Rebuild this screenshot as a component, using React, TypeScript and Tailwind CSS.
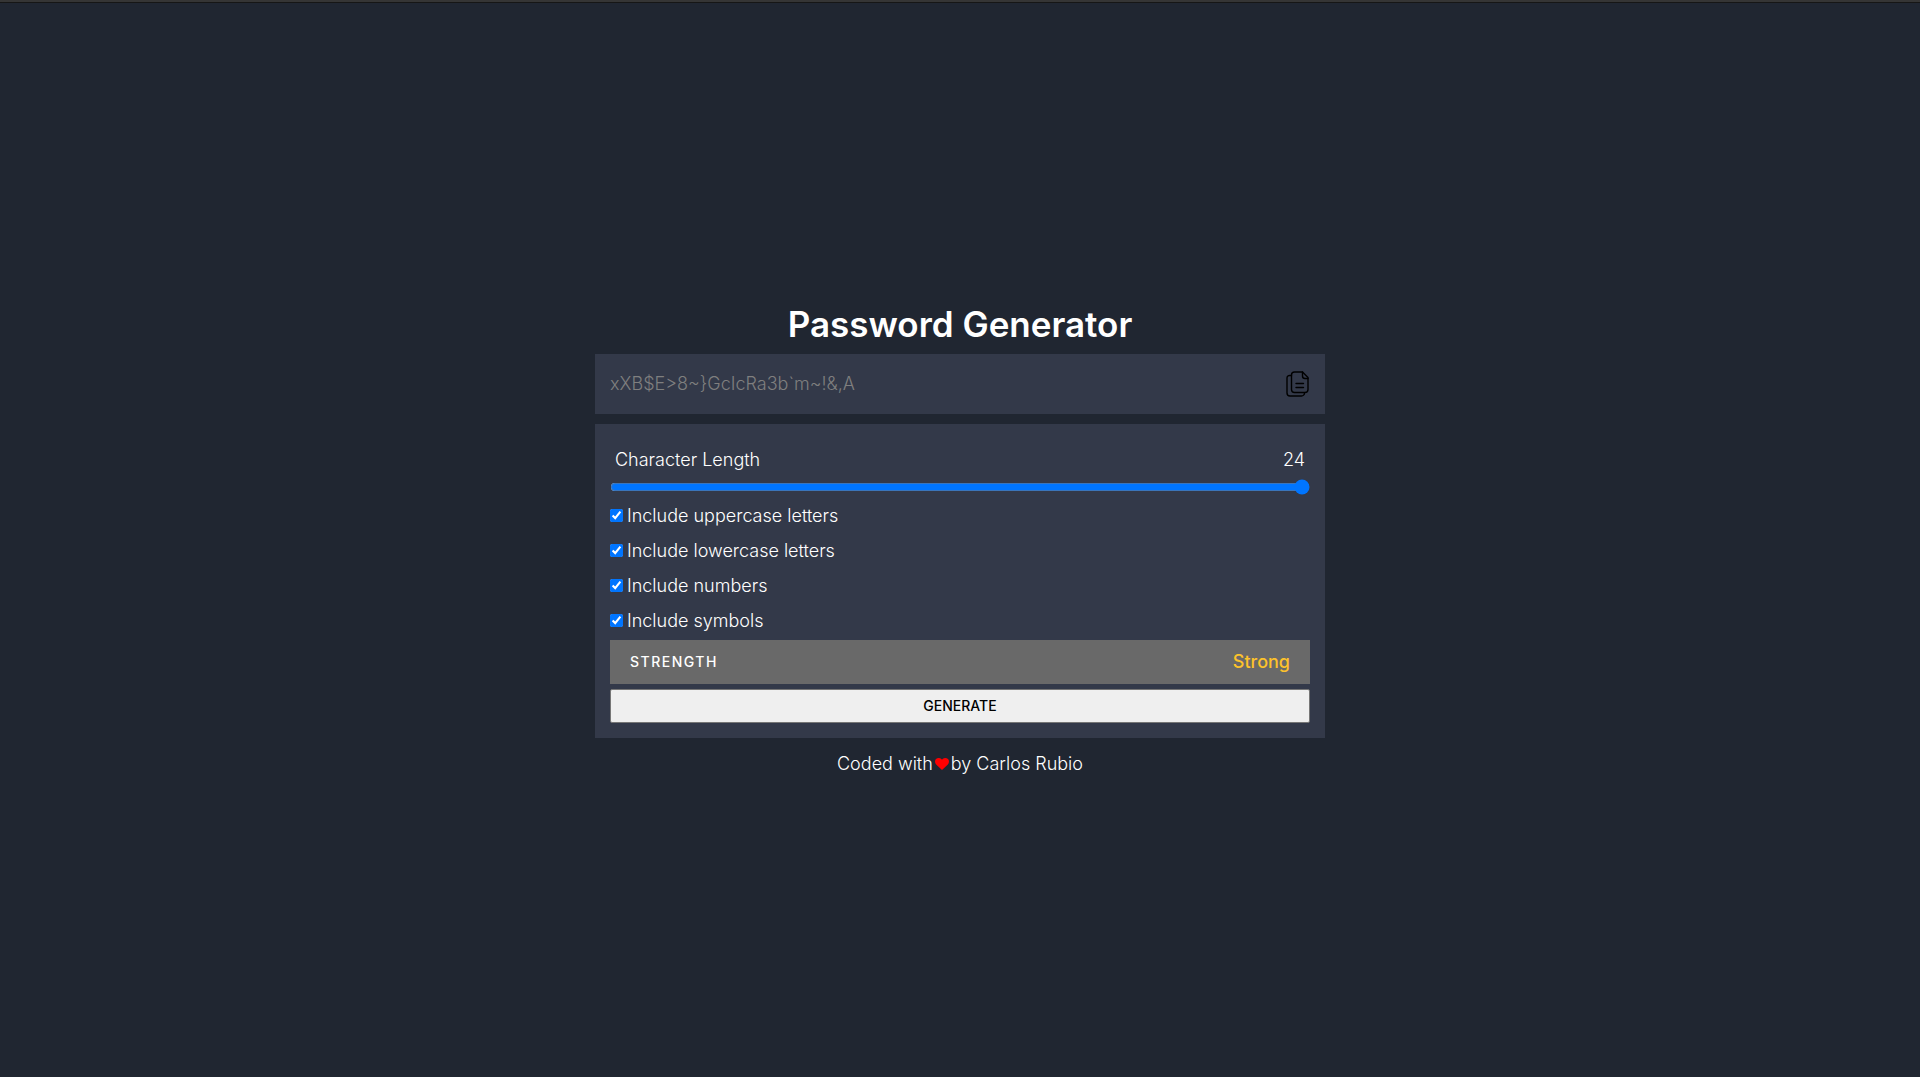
import { useState } from "react";
import type { SVGProps } from "react";

const OPTIONS = [
  { id: "uppercase", label: "Include uppercase letters" },
  { id: "lowercase", label: "Include lowercase letters" },
  { id: "numbers", label: "Include numbers" },
  { id: "symbols", label: "Include symbols" },
];

function CopyIcon(props: SVGProps<SVGSVGElement>) {
  return (
    <svg viewBox="0 0 24 26" fill="none" stroke="currentColor" strokeWidth="1.4" strokeLinecap="round" strokeLinejoin="round" {...props}>
      <path d="M8.500 1H16.500L22 6.500V18.500a3 3 0 0 1-3 3H8.500a3 3 0 0 1-3-3V4a3 3 0 0 1 3-3z" />
      <path d="M16.500 1v4a2.500 2.500 0 0 0 2.500 2.500h3" />
      <path d="M5.500 4.500H4A2.500 2.500 0 0 0 1 7v15a3 3 0 0 0 3 3h11.500a3 3 0 0 0 3-3" />
      <path d="M10 12.500h7.500M10 16.500h7.500" />
    </svg>
  );
}

function HeartIcon(props: SVGProps<SVGSVGElement>) {
  return (
    <svg viewBox="0 0 14 12" fill="red" {...props}>
      <path d="M7 12 1.400 6.700C-.3 5-.4 2.500 1 1.100 2.600-.4 5-.3 6.400 1.100l.6.700.6-.7C9-.3 11.400-.4 13 1.100c1.400 1.400 1.300 3.900-.4 5.600z" />
    </svg>
  );
}

export default function App() {
  const [length, setLength] = useState(24);

  return (
    <div className="flex min-h-screen flex-col bg-[#202631] font-['Inter',sans-serif] text-[18px] leading-[25px] font-light text-white">
      <div className="h-[3px] border-b border-[#161616] bg-[#353535]" />
      <main className="flex grow flex-col items-center justify-center px-4 pb-[3px]">
        <h1 className="pt-[6px] text-[35px] leading-[60px] font-semibold">Password Generator</h1>

        <div className="mb-[10px] flex h-[60px] w-full max-w-[730px] items-center bg-[#333949] px-[15px]">
          <input
            type="text"
            aria-label="Generated password"
            placeholder="xXB$E>8~}GcIcRa3b`m~!&,A"
            className="min-w-0 grow bg-transparent outline-none placeholder:text-[#7f7f7f]"
          />
          <button type="button" aria-label="Copy password" className="text-black">
            <CopyIcon className="h-[26px] w-6" />
          </button>
        </div>

        <form className="flex w-full max-w-[730px] flex-col bg-[#333949] p-[15px]" onSubmit={(e) => e.preventDefault()}>
          <div className="flex h-10 items-center justify-between px-[5px] pt-[2px]">
            <label htmlFor="length">Character Length</label>
            <output htmlFor="length">{length}</output>
          </div>
          <input
            id="length"
            type="range"
            min={4}
            max={24}
            value={length}
            onChange={(e) => setLength(Number(e.target.value))}
            className="mb-[3px] h-4 w-full"
          />
          {OPTIONS.map(({ id, label }) => (
            <div key={id} className="flex items-center gap-1 py-[5px]">
              <input id={id} type="checkbox" defaultChecked className="size-[13px]" />
              <label htmlFor={id}>{label}</label>
            </div>
          ))}
          <div className="mt-[2px] flex h-11 items-center justify-between bg-[#696969] px-5">
            <span className="text-[14px] font-medium tracking-[1.5px]">STRENGTH</span>
            <span className="font-medium text-[#fdc22b]">Strong</span>
          </div>
          <button
            type="submit"
            className="mt-[5px] h-[34px] rounded-[2px] border border-[#767676] bg-[#efefef] text-[14px] font-medium text-black"
          >
            GENERATE
          </button>
        </form>

        <footer className="flex h-[52px] items-center">
          <span>Coded with</span>
          <HeartIcon className="mx-[2px] h-3 w-[14px]" />
          <span>by Carlos Rubio</span>
        </footer>
      </main>
    </div>
  );
}
